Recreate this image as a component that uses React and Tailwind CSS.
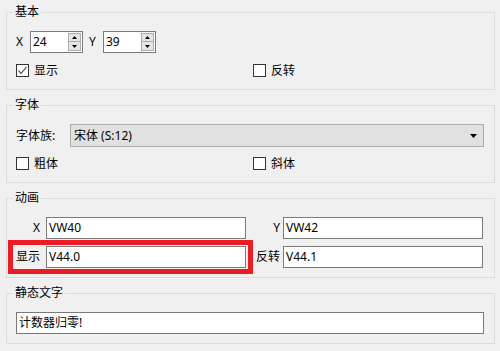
import React from "react";

function Group({ title, children }) {
  return (
    <fieldset className="ml-[6px] mr-[5px] border border-[#dcdcdc] min-w-0">
      <legend className="ml-[6px] px-[2px] text-[12px] leading-[16px] text-black">{title}</legend>
      {children}
    </fieldset>
  );
}

function CheckBox({ checked, label, className = "" }) {
  return (
    <div className={`flex items-center h-[13px] ${className}`}>
      <svg width="13" height="13" viewBox="0 0 13 13" className="shrink-0">
        <rect x="0.5" y="0.5" width="12" height="12" fill="#ffffff" stroke="#333333" strokeWidth="1" />
        {checked && (
          <polyline points="2.5,6.5 5,9.5 10.5,3" fill="none" stroke="#333333" strokeWidth="1.1" />
        )}
      </svg>
      <span className="ml-[5px] text-[12px] leading-[16px]">{label}</span>
    </div>
  );
}

function SpinBox({ value }) {
  return (
    <div className="w-[53px] h-[22px] border border-[#7a7a7a] bg-white flex items-center">
      <span className="flex-1 pl-[2px] text-[12px] leading-[20px]">{value}</span>
      <div className="mr-[1px] flex flex-col w-[13px]">
        <div className="h-[9px] border border-[#acacac] bg-[#e5e5e5] flex items-center justify-center">
          <svg width="5" height="3" viewBox="0 0 5 3"><polygon points="2.5,0 5,3 0,3" fill="#000" /></svg>
        </div>
        <div className="h-[9px] border border-t-0 border-[#acacac] bg-[#e5e5e5] flex items-center justify-center">
          <svg width="5" height="3" viewBox="0 0 5 3"><polygon points="0,0 5,0 2.5,3" fill="#000" /></svg>
        </div>
      </div>
    </div>
  );
}

function TextBox({ value, className = "" }) {
  return (
    <div className={`h-[22px] border border-[#7a7a7a] bg-white pl-[2px] text-[12px] leading-[20px] ${className}`}>
      {value}
    </div>
  );
}

export default function App() {
  return (
    <div className='w-[500px] h-[351px] bg-[#f0f0f0] overflow-hidden text-black font-[family-name:"Noto_Sans","Noto_Sans_CJK_SC",sans-serif] flex flex-col pt-[4px] gap-[7px]'>
      <Group title="基本">
        <div className="pl-[9px] pt-[11px] pb-[12px]">
          <div className="flex items-center h-[22px] text-[12px] leading-[16px]">
            <span className="w-[14px]">X</span>
            <SpinBox value="24" />
            <span className="w-[14px] ml-[6px]">Y</span>
            <SpinBox value="39" />
          </div>
          <div className="flex mt-[11px]">
            <CheckBox checked label="显示" className="w-[237px]" />
            <CheckBox label="反转" />
          </div>
        </div>
      </Group>

      <Group title="字体">
        <div className="pl-[9px] pt-[11px] pb-[12px]">
          <div className="flex items-center h-[23px] text-[12px] leading-[16px]">
            <span className="w-[54px]">字体族:</span>
            <div className="w-[414px] h-[23px] border border-[#adadad] bg-[#e1e1e1] flex items-center pl-[3px] pr-[6px]">
              <span className="flex-1">宋体 (S:12)</span>
              <svg width="7" height="4" viewBox="0 0 7 4"><polygon points="0,0 7,0 3.5,4" fill="#000" /></svg>
            </div>
          </div>
          <div className="flex mt-[10px]">
            <CheckBox label="粗体" className="w-[237px]" />
            <CheckBox label="斜体" />
          </div>
        </div>
      </Group>

      <Group title="动画">
        <div className="pl-[1px] pt-[11px] pb-[3px] text-[12px] leading-[16px]">
          <div className="flex items-center h-[22px]">
            <div className="w-[245px] flex items-center pl-[8px] gap-[6px]">
              <span className="w-[24px] text-right">X</span>
              <TextBox value="VW40" className="w-[200px]" />
            </div>
            <span className="w-[27px] text-right">Y</span>
            <TextBox value="VW42" className="ml-[3px] w-[200px]" />
          </div>
          <div className="flex items-center mt-[1px]">
            <div className="w-[245px] flex items-center border-[5px] border-[#ed1c24] pl-[3px] py-[1px] gap-[6px]">
              <span className="w-[24px] text-right">显示</span>
              <TextBox value="V44.0" className="w-[200px]" />
            </div>
            <span className="w-[27px] text-right">反转</span>
            <TextBox value="V44.1" className="ml-[3px] w-[200px]" />
          </div>
        </div>
      </Group>

      <Group title="静态文字">
        <div className="pl-[9px] pt-[11px] pb-[9px]">
          <TextBox value="计数器归零!" className="w-[468px]" />
        </div>
      </Group>
    </div>
  );
}
